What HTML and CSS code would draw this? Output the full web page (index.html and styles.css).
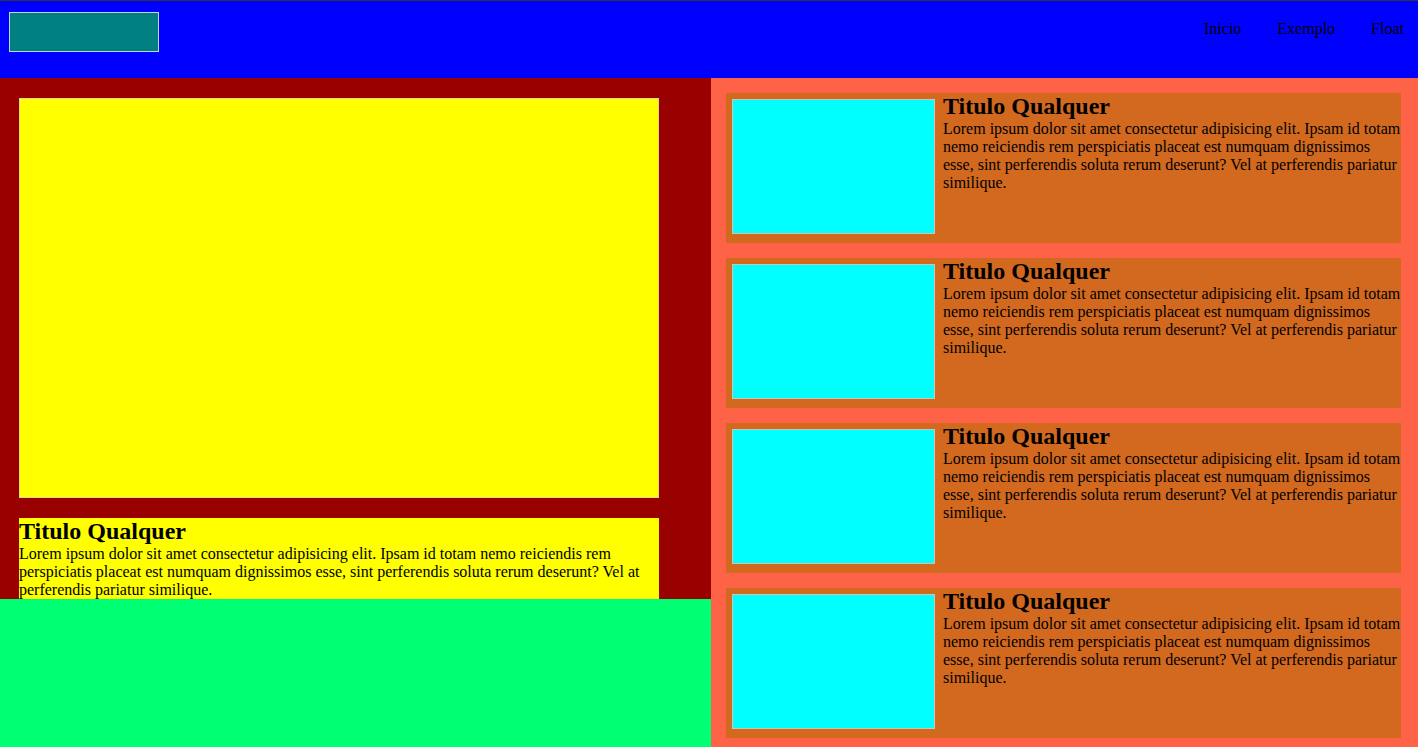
FILE: index.html
```html
<!DOCTYPE html>
<html lang="pt">
<head>
<meta charset="utf-8">
<title>Float</title>
<link rel="stylesheet" href="styles.css">
</head>
<body>
<header class="header">
  <div class="logo"></div>
  <nav class="nav">
    <a class="nav-link" href="#">Inicio</a>
    <a class="nav-link" href="#">Exemplo</a>
    <a class="nav-link" href="#">Float</a>
  </nav>
</header>
<main class="main">
  <div class="left">
    <section class="featured">
      <div class="featured-image"></div>
      <div class="featured-text">
        <h2 class="title">Titulo Qualquer</h2>
        <p class="text">Lorem ipsum dolor sit amet consectetur adipisicing elit. Ipsam id totam nemo reiciendis rem perspiciatis placeat est numquam dignissimos esse, sint perferendis soluta rerum deserunt? Vel at perferendis pariatur similique.</p>
      </div>
    </section>
    <footer class="footer"></footer>
  </div>
  <aside class="right">
    <article class="card">
      <div class="card-image"></div>
      <h2 class="title">Titulo Qualquer</h2>
      <p class="text">Lorem ipsum dolor sit amet consectetur adipisicing elit. Ipsam id totam nemo reiciendis rem perspiciatis placeat est numquam dignissimos esse, sint perferendis soluta rerum deserunt? Vel at perferendis pariatur similique.</p>
    </article>
    <article class="card">
      <div class="card-image"></div>
      <h2 class="title">Titulo Qualquer</h2>
      <p class="text">Lorem ipsum dolor sit amet consectetur adipisicing elit. Ipsam id totam nemo reiciendis rem perspiciatis placeat est numquam dignissimos esse, sint perferendis soluta rerum deserunt? Vel at perferendis pariatur similique.</p>
    </article>
    <article class="card">
      <div class="card-image"></div>
      <h2 class="title">Titulo Qualquer</h2>
      <p class="text">Lorem ipsum dolor sit amet consectetur adipisicing elit. Ipsam id totam nemo reiciendis rem perspiciatis placeat est numquam dignissimos esse, sint perferendis soluta rerum deserunt? Vel at perferendis pariatur similique.</p>
    </article>
    <article class="card">
      <div class="card-image"></div>
      <h2 class="title">Titulo Qualquer</h2>
      <p class="text">Lorem ipsum dolor sit amet consectetur adipisicing elit. Ipsam id totam nemo reiciendis rem perspiciatis placeat est numquam dignissimos esse, sint perferendis soluta rerum deserunt? Vel at perferendis pariatur similique.</p>
    </article>
  </aside>
</main>
</body>
</html>
```

FILE: styles.css
```css
* {
  box-sizing: border-box;
}

html, body {
  margin: 0;
  padding: 0;
  height: 100%;
  overflow: hidden;
}

body {
  font-family: "Liberation Serif", "Times New Roman", serif;
  font-size: 16px;
  color: #000;
  display: flex;
  flex-direction: column;
}

.header {
  flex: 0 0 auto;
  height: 78px;
  background: #0000ff;
  border-top: 1px solid #333;
  display: flex;
  justify-content: space-between;
  align-items: flex-start;
}

.logo {
  width: 150px;
  height: 40px;
  margin: 11px 0 0 9px;
  background: #008080;
  border: 1px solid #c4d4e4;
}

.nav {
  display: flex;
  gap: 36px;
  margin-top: 19px;
  padding-right: 14px;
}

.nav-link {
  color: #000;
  text-decoration: none;
  line-height: normal;
}

.main {
  flex: 1 1 auto;
  display: grid;
  grid-template-columns: 711px 1fr;
  min-height: 0;
}

.left {
  display: flex;
  flex-direction: column;
  min-height: 0;
}

.featured {
  background: #990000;
  padding: 20px 52px 0 19px;
}

.featured-image {
  width: 640px;
  height: 400px;
  background: #ffff00;
  border: 1px solid #e6d68a;
}

.featured-text {
  width: 640px;
  margin-top: 20px;
  background: #ffff00;
}

.footer {
  flex: 1 1 auto;
  background: #00ff73;
}

.title {
  margin: 0;
  font-size: 24px;
  font-weight: bold;
  line-height: normal;
}

.text {
  margin: 0;
  line-height: normal;
}

.right {
  background: #ff6347;
  padding: 15px 17px 9px 15px;
  display: flex;
  flex-direction: column;
  gap: 15px;
}

.card {
  height: 150px;
  background: #d2691e;
  overflow: hidden;
}

.card-image {
  float: left;
  width: 203px;
  height: 135px;
  margin: 6px 8px 0 6px;
  background: #00ffff;
  border: 1px solid #c8c8b8;
}
```
